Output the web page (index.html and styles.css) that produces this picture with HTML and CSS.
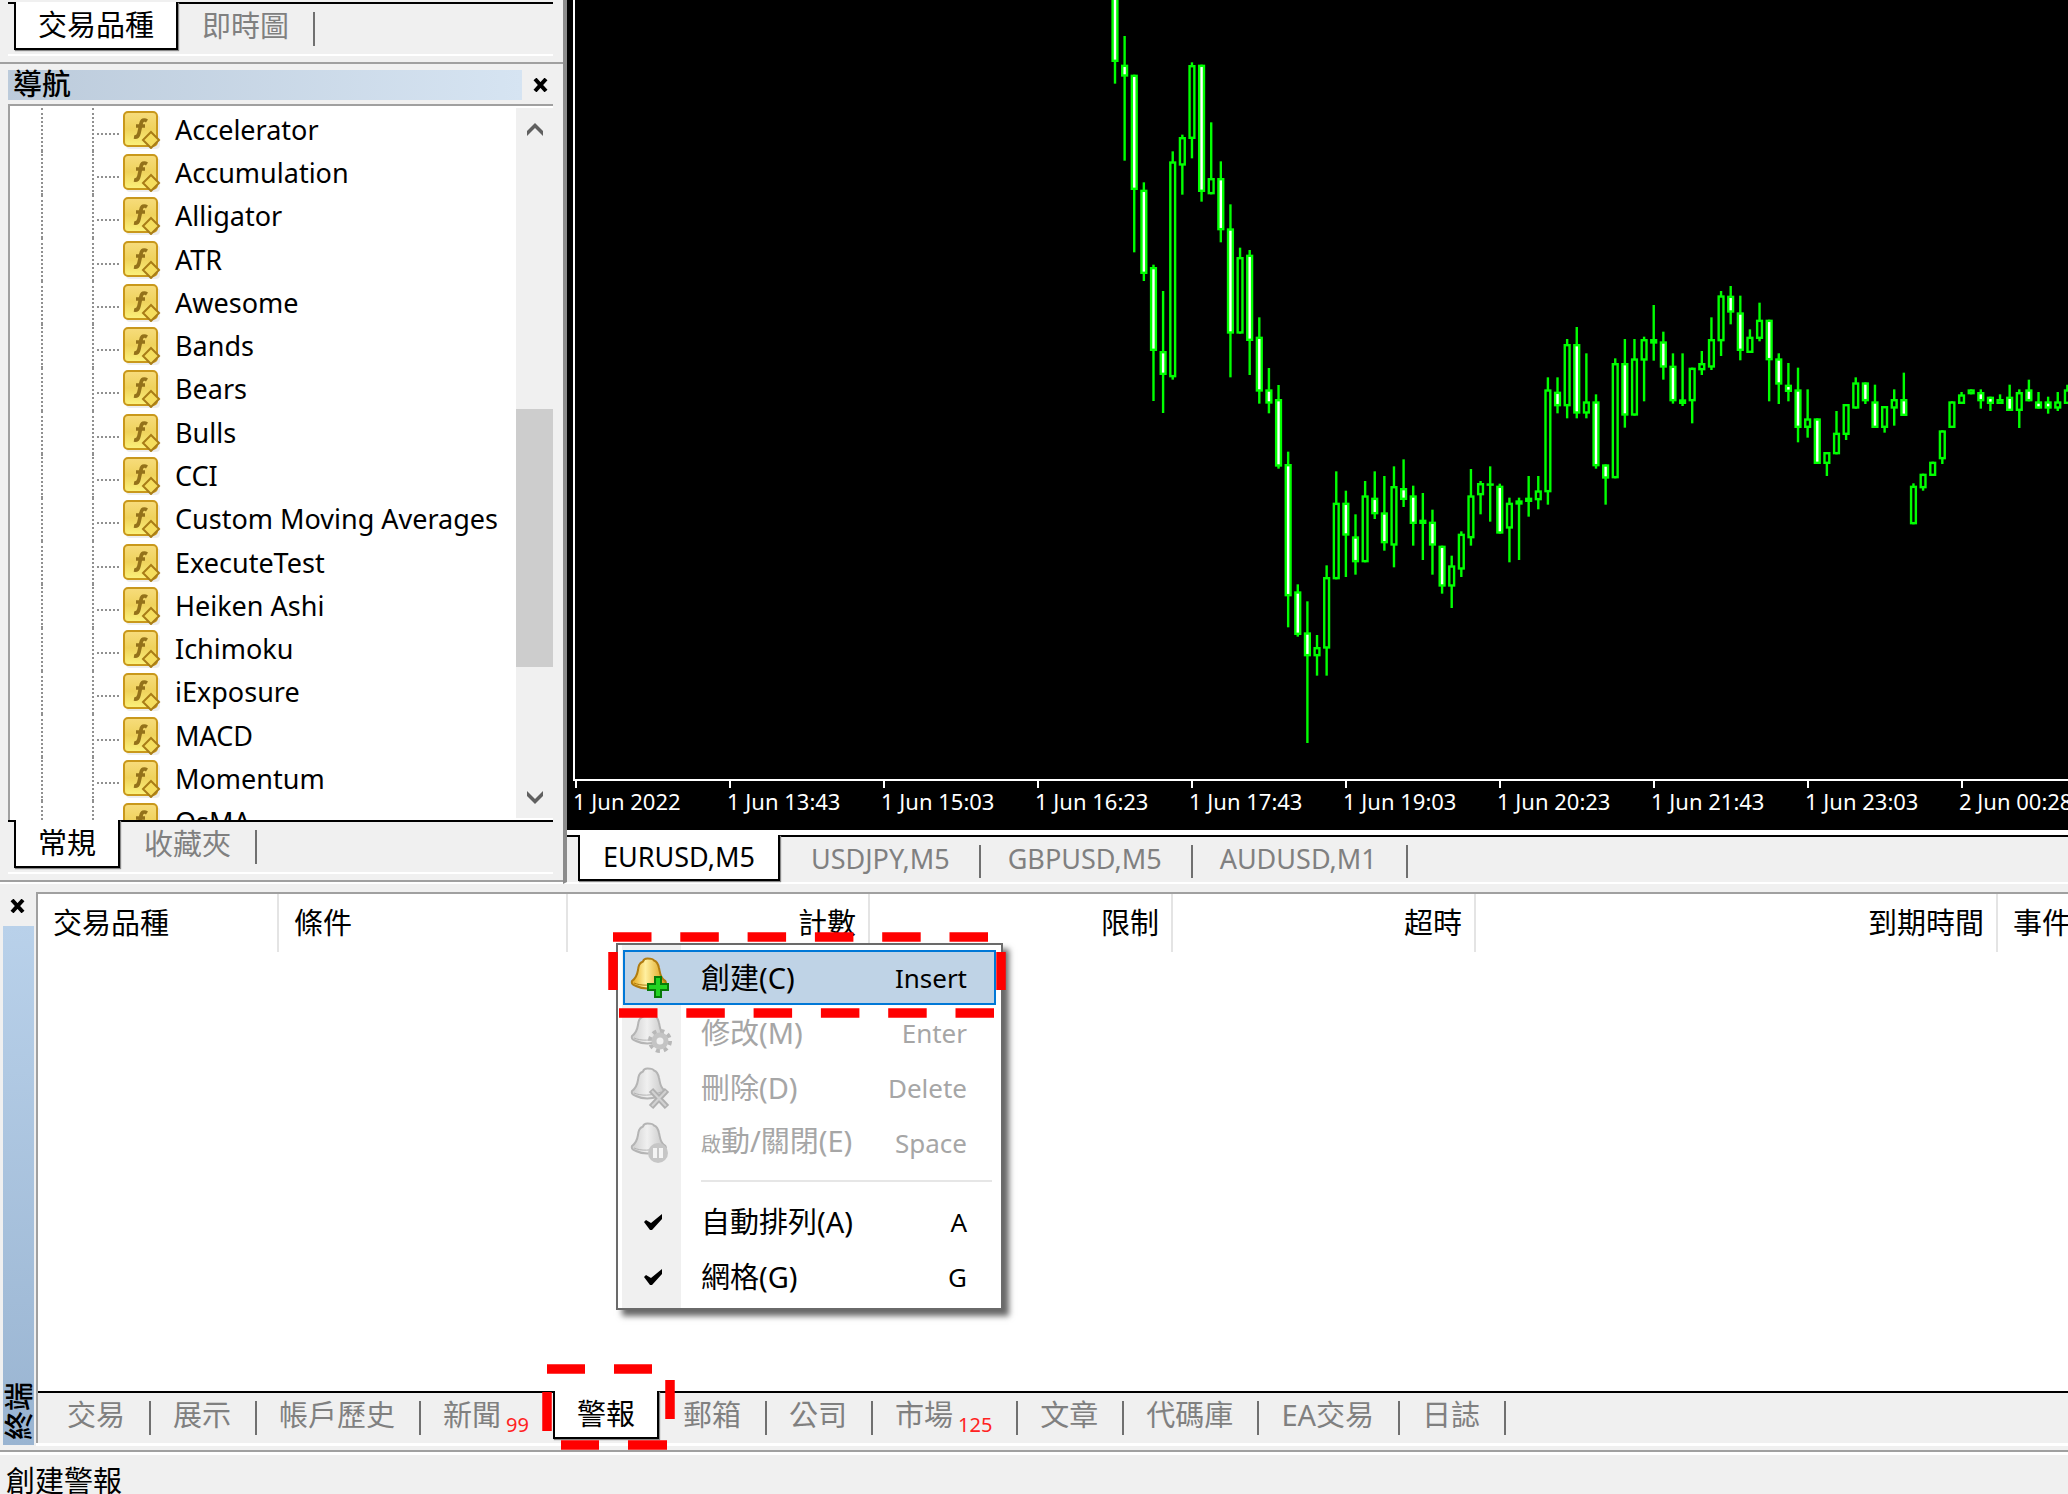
FILE: index.html
```html
<!DOCTYPE html>
<html lang="zh-Hant">
<head>
<meta charset="utf-8">
<title>EURUSD,M5</title>
<link rel="stylesheet" href="styles.css">
</head>
<body>
<svg class="defs" aria-hidden="true">
  <defs>
    <linearGradient id="gold" x1="0" y1="0" x2="0" y2="1"><stop offset="0" stop-color="#f7dc7c"/><stop offset=".5" stop-color="#efd25c"/><stop offset="1" stop-color="#fbf27c"/></linearGradient>
    <linearGradient id="bellGold" x1="0" y1="0" x2="1" y2="0"><stop offset="0" stop-color="#e8a91c"/><stop offset=".4" stop-color="#fff0a0"/><stop offset="1" stop-color="#d99a0c"/></linearGradient>
    <linearGradient id="bellGrey" x1="0" y1="0" x2="1" y2="0"><stop offset="0" stop-color="#cfcfcf"/><stop offset=".45" stop-color="#f0f0f0"/><stop offset="1" stop-color="#c4c4c4"/></linearGradient>
    <symbol id="fn" viewBox="0 0 38 38">
      <rect x="3" y="4" width="34" height="34" rx="4" fill="#000" opacity=".07"/>
      <rect x="1" y="1" width="33" height="34" rx="4" fill="url(#gold)" stroke="#c9981b" stroke-width="2"/>
      <path d="M24 10c-3-2-5.500-1-6 3L16 22c-.6 3-2 4.500-5 4M13 15h9" fill="none" stroke="#94721a" stroke-width="3.600"/>
      <path d="M28 21l8 8-8 8-8-8z" fill="#f5dd5e" stroke="#a87c17" stroke-width="2"/>
    </symbol>
    <symbol id="bell" viewBox="0 0 42 42">
      <path d="M17.500 1.500c-3 0-4 1-4.500 3C9 6 8.500 9 8 13c-1 6-3 9-6 11-1 3 1 4 4 5 6 3 14 3 22 1l6-2c3-2 2-4 0-5-4-3-4-8-5-12-.8-4-2-6.500-5-7.500-1-2-3-2-6.500-2z"/>
      <path d="M4 26c7 3 17 3 27-1" fill="none" stroke-width="1"/>
    </symbol>
    <symbol id="tick" viewBox="0 0 18 18"><path d="M0 9l2-2 5 3 11-9v5L8 17H6z" fill="#000"/></symbol>
    <symbol id="close" viewBox="0 0 15 14"><path d="M2 1l11 12M13 1L2 13" fill="none" stroke="#000" stroke-width="4"/></symbol>
  </defs>
</svg>
<div class="app">
  <div class="workspace">
    <aside class="side">
      <section class="market">
        <nav class="tabs">
          <button class="tab active">交易品種</button>
          <button class="tab">即時圖</button>
        </nav>
      </section>
      <section class="navigator">
        <header class="caption">
          <h2 class="caption-title">導航</h2>
          <button class="close" aria-label="關閉"><svg class="close-icon"><use href="#close"/></svg></button>
        </header>
        <div class="tree">
          <ul class="tree-list" id="indicators"></ul>
          <div class="scroll">
            <button class="scroll-btn" aria-label="向上"><svg class="arrow" viewBox="0 0 18 15"><path d="M1 14V9l8-8 8 8v5L9 6z" fill="#606060"/></svg></button>
            <div class="scroll-before"></div>
            <div class="scroll-thumb"></div>
            <div class="scroll-after"></div>
            <button class="scroll-btn" aria-label="向下"><svg class="arrow" viewBox="0 0 18 15"><path d="M1 1v5l8 8 8-8V1L9 9z" fill="#606060"/></svg></button>
          </div>
        </div>
        <nav class="tabs">
          <button class="tab active">常規</button>
          <button class="tab">收藏夾</button>
        </nav>
      </section>
    </aside>
    <main class="charts">
      <div class="chart">
        <svg class="plot" id="plot" role="img" aria-label="EURUSD,M5"></svg>
        <div class="axis">
          <span class="time">1 Jun 2022</span><span class="time">1 Jun 13:43</span><span class="time">1 Jun 15:03</span><span class="time">1 Jun 16:23</span><span class="time">1 Jun 17:43</span><span class="time">1 Jun 19:03</span><span class="time">1 Jun 20:23</span><span class="time">1 Jun 21:43</span><span class="time">1 Jun 23:03</span><span class="time">2 Jun 00:28</span>
        </div>
      </div>
      <nav class="tabs chart-tabs">
        <button class="tab active">EURUSD,M5</button>
        <button class="tab">USDJPY,M5</button>
        <button class="tab">GBPUSD,M5</button>
        <button class="tab">AUDUSD,M1</button>
      </nav>
    </main>
  </div>
  <section class="terminal">
    <div class="grip">
      <button class="close" aria-label="關閉"><svg class="close-icon"><use href="#close"/></svg></button>
      <div class="grip-bar"><h2 class="grip-title">終端</h2></div>
    </div>
    <div class="pane">
      <div class="alerts">
        <table class="alert-table">
          <colgroup><col class="c-symbol"><col class="c-cond"><col class="c-count"><col class="c-limit"><col class="c-timeout"><col class="c-expiry"><col></colgroup>
          <thead><tr><th>交易品種</th><th>條件</th><th class="num">計數</th><th class="num">限制</th><th class="num">超時</th><th class="num">到期時間</th><th>事件</th></tr></thead>
        </table>
      </div>
      <nav class="tabs terminal-tabs">
        <button class="tab">交易</button>
        <button class="tab">展示</button>
        <button class="tab">帳戶歷史</button>
        <button class="tab last">新聞<span class="badge">99</span></button>
        <button class="tab active">警報</button>
        <button class="tab">郵箱</button>
        <button class="tab">公司</button>
        <button class="tab">市場<span class="badge">125</span></button>
        <button class="tab">文章</button>
        <button class="tab">代碼庫</button>
        <button class="tab">EA交易</button>
        <button class="tab">日誌</button>
      </nav>
    </div>
  </section>
  <footer class="status">創建警報</footer>

  <div class="menu" role="menu">
    <button class="item selected" role="menuitem">
      <svg class="icon" viewBox="0 0 42 42"><use href="#bell" width="42" height="42" fill="url(#bellGold)" stroke="#b07c10" stroke-width="2"/><path d="M25 20h6v7h7v6h-7v7h-6v-7h-7v-6h7z" fill="#22d422" stroke="#087a08" stroke-width="2"/></svg>
      <span class="label">創建(C)</span><span class="key">Insert</span>
    </button>
    <button class="item" role="menuitem" disabled>
      <svg class="icon" viewBox="0 0 42 42"><use href="#bell" width="42" height="42" fill="url(#bellGrey)" stroke="#b4b4b4" stroke-width="2"/><circle cx="30" cy="29" r="10" fill="none" stroke="#b8b8b8" stroke-width="4" stroke-dasharray="4 3.850"/><circle cx="30" cy="29" r="6" fill="#f0f0f0" stroke="#c4c4c4" stroke-width="5"/></svg>
      <span class="label">修改(M)</span><span class="key">Enter</span>
    </button>
    <button class="item" role="menuitem" disabled>
      <svg class="icon" viewBox="0 0 42 42"><use href="#bell" width="42" height="42" fill="url(#bellGrey)" stroke="#b4b4b4" stroke-width="2"/><path d="M21 23l16 17M37 23L21 40" fill="none" stroke="#b0b0b0" stroke-width="6"/><path d="M22 24l14 15M36 24L22 39" fill="none" stroke="#d2d2d2" stroke-width="2"/></svg>
      <span class="label">刪除(D)</span><span class="key">Delete</span>
    </button>
    <button class="item" role="menuitem" disabled>
      <svg class="icon" viewBox="0 0 42 42"><use href="#bell" width="42" height="42" fill="url(#bellGrey)" stroke="#b4b4b4" stroke-width="2"/><circle cx="28" cy="31" r="10" fill="#c6c6c6"/><path d="M25 26v10M31 26v10" stroke="#f4f4f4" stroke-width="4"/></svg>
      <span class="label"><span class="small">啟</span>動/關閉(E)</span><span class="key">Space</span>
    </button>
    <div class="rule" role="separator"></div>
    <button class="item" role="menuitemcheckbox" aria-checked="true">
      <svg class="check"><use href="#tick"/></svg><span class="label">自動排列(A)</span><span class="key">A</span>
    </button>
    <button class="item" role="menuitemcheckbox" aria-checked="true">
      <svg class="check"><use href="#tick"/></svg><span class="label">網格(G)</span><span class="key">G</span>
    </button>
  </div>
  <svg class="mark mark-menu" viewBox="0 0 398 86" aria-hidden="true">
    <path d="M5 5H393" stroke-dasharray="38.500 28.800"/><path d="M11 81H394" stroke-dasharray="38.500 28.800"/><path d="M5 20V58M393 20V58"/>
  </svg>
  <svg class="mark mark-tab" viewBox="0 0 134 86" aria-hidden="true">
    <path d="M6 5H44M73 5H111M20 81H58M87 81H126M6 28V67M129 16V55"/>
  </svg>
</div>
<script src="script.js"></script>
</body>
</html>
```
FILE: styles.css
```css
* { box-sizing: border-box; }

body {
  margin: 0;
  background: #f0f0f0;
  color: #000;
  font-family: "Noto Sans", "Noto Sans CJK TC", sans-serif;
  font-size: 27px;
}

button {
  margin: 0;
  padding: 0;
  border: 0;
  background: none;
  color: inherit;
  font: inherit;
}

h2 { margin: 0; font-weight: 500; }

.defs { position: absolute; width: 0; height: 0; }

.app {
  position: relative;
  display: flex;
  flex-direction: column;
  height: 100vh;
  overflow: hidden;
}

.workspace { flex: 1; display: flex; min-height: 0; }

/* tab strips */
.tabs {
  display: flex;
  align-items: flex-start;
  height: 52px;
  padding-left: 6px;
  border-top: 2px solid #000;
  background: #f0f0f0;
  color: #808080;
  font-size: 29px;
  white-space: nowrap;
}

.tab {
  flex: none;
  height: 34px;
  margin-top: 8px;
  padding: 0 24px 6px 22px;
  border-right: 2px solid #707070;
  line-height: 28px;
}

.tab.last { padding-right: 24px; border-right: 0; }

.tab.active {
  height: 48px;
  margin-top: -2px;
  padding: 0 22px;
  border: solid #000;
  border-width: 0 2px 2px;
  background: #fff;
  box-shadow: 1px 1px 1px #888;
  color: #000;
}

.tab.active + .tab { padding-left: 24px; }

.badge {
  margin-left: 5px;
  color: #f22;
  font-size: 20px;
  vertical-align: -6px;
  line-height: 20px;
}

/* left column */
.side {
  flex: none;
  display: flex;
  flex-direction: column;
  width: 563px;
  border-bottom: 2px solid #fff;
}

.market {
  height: 64px;
  padding: 2px 10px 6px 8px;
  border-bottom: 2px solid #a0a0a0;
}

.market .tabs, .navigator .tabs { box-shadow: 0 2px #fff; }

.navigator {
  flex: 1;
  display: flex;
  flex-direction: column;
  min-height: 0;
  padding: 6px 10px 8px 8px;
  border-bottom: 2px solid #a0a0a0;
}

.caption { display: flex; align-items: center; height: 30px; margin-bottom: 4px; }

.caption-title {
  flex: 1;
  height: 30px;
  padding-left: 5px;
  background: linear-gradient(90deg, #bccbdb, #d6e4f2);
  font-size: 29px;
  line-height: 28px;
}

.close { width: 33px; height: 30px; display: flex; align-items: center; justify-content: center; }
.caption .close { width: 31px; justify-content: flex-end; padding-right: 5px; }
.close-icon { width: 15px; height: 14px; }

.tree {
  flex: 1;
  display: flex;
  min-height: 0;
  padding: 2px 0;
  border: solid #a0a0a0;
  border-width: 2px 0 0 2px;
  background: #fff;
  overflow: hidden;
}

.tree-list {
  flex: 1;
  display: grid;
  grid-template-rows: repeat(17, 1fr);
  height: 736px;
  margin: 0;
  padding: 0 0 0 31px;
  list-style: none;
}

.node {
  display: flex;
  align-items: center;
  min-height: 0;
  border-left: 2px dotted #909090;
  padding-left: 49px;
}

.branch {
  align-self: stretch;
  display: flex;
  align-items: center;
  width: 31px;
  padding-top: 8px;
  border-left: 2px dotted #909090;
}

.branch::after { content: ""; width: 22px; margin-left: 3px; border-top: 2px dotted #909090; }
.fn { flex: none; width: 38px; height: 38px; }
.name { padding-left: 14px; line-height: 36px; white-space: nowrap; }

.scroll { display: flex; flex-direction: column; width: 37px; background: #f0f0f0; }
.scroll-btn { height: 42px; display: flex; align-items: center; justify-content: center; }
.arrow { width: 18px; height: 15px; }
.scroll-before { flex: 259; }
.scroll-thumb { flex: 257; background: #cdcdcd; }
.scroll-after { flex: 109; }

/* chart */
.charts {
  flex: 1;
  display: flex;
  flex-direction: column;
  min-width: 0;
  border-left: 4px solid #8c8c8c;
  border-bottom: 2px solid #fff;
}

.chart {
  flex: 1;
  display: flex;
  flex-direction: column;
  min-height: 0;
  padding-left: 6px;
  border-bottom: 5px solid #fff;
  background: #000;
}

.plot { flex: 1; width: 100%; min-height: 0; border-left: 2px solid #fff; border-bottom: 2px solid #fff; }
.wick, .body { stroke: #0f0; stroke-width: 2.4; fill: #000; }
.body.down { fill: #fff; }

.axis { display: flex; height: 49px; overflow: hidden; color: #fff; font-size: 22px; line-height: 26px; }
.time { flex: none; width: 154px; white-space: nowrap; }
.time::before { content: ""; display: block; width: 2px; height: 7px; margin-left: 2px; background: #fff; }

.chart-tabs { height: 47px; padding-left: 11px; font-size: 27px; }
.chart-tabs .tab { height: 33px; padding: 0 29px 5px 27px; }
.chart-tabs .tab.active { height: 46px; padding: 0 23px; }
.chart-tabs .tab.active + .tab { padding-left: 31px; }

/* terminal */
.terminal { flex: none; display: flex; height: 566px; padding-top: 8px; }

.grip { display: flex; flex-direction: column; width: 36px; padding: 0 2px 5px 3px; }
.grip .close { width: 28px; height: 28px; margin-bottom: 6px; }
.grip-bar {
  flex: 1;
  display: flex;
  align-items: flex-end;
  justify-content: center;
  padding-bottom: 5px;
  background: linear-gradient(#b9d1ea, #99b4d1);
}
.grip-title {
  font-size: 29px;
  line-height: 31px;
  writing-mode: vertical-rl;
  text-orientation: sideways;
  transform: rotate(180deg);
}

.pane {
  flex: 1;
  display: flex;
  flex-direction: column;
  min-width: 0;
  margin-bottom: 7px;
  border: solid #a0a0a0;
  border-width: 2px 0 0 2px;
  box-shadow: 0 3px #fff;
}

.alerts { flex: 1; overflow: hidden; background: #fff; }
.alert-table { width: 100%; table-layout: fixed; border-collapse: collapse; }
.alert-table th {
  height: 58px;
  padding: 0 12px 0 15px;
  border-right: 2px solid #e4e4e4;
  overflow: hidden;
  font-size: 29px;
  font-weight: 400;
  line-height: 34px;
  text-align: left;
  white-space: nowrap;
}
.alert-table th:last-child { padding-right: 0; border-right: 0; }
.alert-table .num { text-align: right; }
.c-symbol { width: 240px; }
.c-cond { width: 289px; }
.c-count { width: 302px; }
.c-limit, .c-timeout { width: 303px; }
.c-expiry { width: 522px; }

.terminal-tabs { padding-left: 7px; }

.status {
  flex: none;
  height: 44px;
  padding: 10px 6px 0;
  border-top: 2px solid #a0a0a0;
  box-shadow: inset 0 3px #fff;
  overflow: hidden;
  font-size: 29px;
  line-height: 38px;
}

/* context menu */
.menu {
  position: absolute;
  left: 616px;
  top: 943px;
  width: 387px;
  padding: 5px 5px 4px;
  border: 2px solid #6a6a6a;
  background: linear-gradient(90deg, #fff 4px, #f0f0f0 4px 63px, #fff 63px);
  box-shadow: 6px 6px 6px rgba(0, 0, 0, .6);
  font-size: 29px;
}

.item {
  display: grid;
  grid-template-columns: 58px 1fr auto;
  align-items: center;
  width: 100%;
  height: 55px;
  padding-right: 29px;
  line-height: 34px;
  text-align: left;
  white-space: nowrap;
}

.item:disabled { color: #a6a6a6; }
.item.selected { background: #bfd3e6; box-shadow: inset 0 0 0 2px #0078d7; }
.icon { width: 42px; height: 42px; margin-left: 7px; }
.check { width: 18px; height: 18px; margin-left: 21px; }
.label { padding-left: 20px; }
.key { font-size: 26px; }
.small { font-size: 20px; }
.rule { height: 2px; margin: 10px 4px 12px 78px; background: #e6e6e6; }

.mark { position: absolute; fill: none; stroke: #f00; stroke-width: 9.5; }
.mark-menu { left: 608px; top: 932px; width: 398px; height: 86px; }
.mark-tab { left: 541px; top: 1364px; width: 134px; height: 86px; }
```
FILE: script.js
```js
const NS = "http://www.w3.org/2000/svg";

const names = ["Accelerator", "Accumulation", "Alligator", "ATR", "Awesome", "Bands", "Bears", "Bulls", "CCI",
  "Custom Moving Averages", "ExecuteTest", "Heiken Ashi", "Ichimoku", "iExposure", "MACD", "Momentum", "OsMA"];

document.getElementById("indicators").innerHTML = names.map(n =>
  `<li class="node"><span class="branch"></span><svg class="fn" aria-hidden="true"><use href="#fn"/></svg><span class="name">${n}</span></li>`
).join("");

// Candles: high, body top, body bottom, low, direction (1 = down, 0 = up), in thirds of a pixel.
const groups = [
  [0, [[-9,-9,186,251,1],[108,194,230,482,1],[224,224,570,757,1],[547,569,822,843,1],[794,801,1053,1203,1],
    [873,1053,1125,1239,1],[454,484,1132,1139,0],[404,411,497,584,0],[187,195,417,475,0],[194,194,576,605,1],
    [367,534,583,583,0],[484,534,691,727,1],[613,685,1001,1132,1],[743,771,1001,1001,0],[750,764,1023,1125,1],
    [952,1010,1175,1211,1],[1104,1168,1211,1240,1]]],
  [1140, [[15,57,260,266,1],[215,252,649,742,1],[613,634,765,770,1],[664,757,829,1089,1],[765,801,829,887,0],
    [556,591,806,887,0],[274,368,598,598,0],[332,368,467,591,1],[403,469,547,584,1],[303,346,547,547,0],
    [274,353,403,417,1],[288,397,490,512,1],[259,318,497,562,0],[238,324,360,381,1],[317,346,432,497,1],
    [339,419,432,540,0],[389,425,497,584,1],[497,497,620,641,1],[527,556,620,684,0],[454,461,569,591,0],
    [267,346,475,497,0],[303,309,346,403,0],[259,310,317,425,0],[311,317,461,461,1],[353,368,446,547,0],
    [353,361,374,540,0],[288,353,366,410,0],[288,331,361,388,0]]],
  [810, [[322,358,667,704,0],[322,365,409,430,1],[207,222,409,445,0],[171,222,431,445,1],[250,394,431,445,0],
    [373,394,589,596,1],[583,583,626,704,1],[265,279,625,625,0],[207,279,437,473,1],[207,265,437,437,0],
    [200,207,272,394,0],[105,207,221,272,0],[185,214,293,329,1],[250,287,394,401,1],[250,388,402,408,0],
    [293,293,394,460,0],[243,279,301,315,0],[142,207,293,300,0],[63,76,214,258,0],[48,77,128,163,1],
    [77,127,243,271,1],[178,200,249,249,0],[98,149,207,214,0],[149,149,271,394,1],[250,265,344,402,1],
    [279,344,366,394,1],[293,358,474,517,1],[358,445,474,503,0],[445,445,582,582,1],[546,546,582,618,0],
    [423,488,553,553,0],[402,402,495,510,0],[322,337,416,416,0],[337,337,394,402,1],[344,394,474,474,1],
    [408,408,474,488,0],[358,387,416,467,0],[308,387,438,438,1],[640,647,763,763,0],[611,611,655,662,0],
    [575,575,618,618,0],[481,481,568,582,0],[394,394,474,474,0],[366,373,402,402,0],[358,358,373,373,0],
    [358,366,394,416,1],[380,380,402,423,1],[373,387,402,402,0],[344,380,423,423,1],[358,366,423,474,0],
    [329,358,394,394,1],[366,394,416,416,1],[380,394,416,431,1],[366,394,416,423,0],[344,358,402,402,0]]]
];

const plot = document.getElementById("plot");
const LINE = 2.4;
const STEP = 9.62;
let x = 540;

function add(tag, cls, attrs) {
  const el = document.createElementNS(NS, tag);
  el.setAttribute("class", cls);
  for (const k in attrs) el.setAttribute(k, attrs[k]);
  plot.appendChild(el);
}

for (const [base, candles] of groups) {
  for (const [hi, top, bottom, lo, down] of candles) {
    const y = v => (v + base) / 3;
    add("line", "wick", { x1: x, x2: x, y1: y(hi), y2: y(lo) });
    add("rect", down ? "body down" : "body", {
      x: x - 2.4, y: y(top) + LINE / 2, width: 4.8, height: Math.max(0.1, y(bottom) - y(top) - LINE)
    });
    x += STEP;
  }
}
```
